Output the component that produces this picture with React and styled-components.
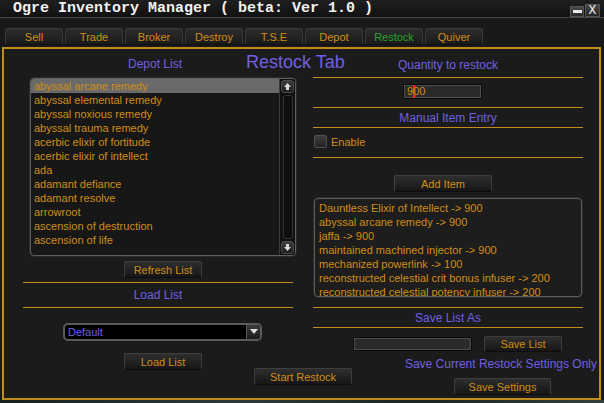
import React from "react";
import styled, { createGlobalStyle } from "styled-components";

const ORANGE = "#d08e14";
const PURPLE = "#6e60e0";
const GOLD = "#c08c1c";

const GlobalStyle = createGlobalStyle`
  html, body {
    margin: 0;
    padding: 0;
    background: #111616;
  }
  body {
    font-family: "Liberation Sans", Arial, sans-serif;
  }
`;

const depotItems = [
  "abyssal arcane remedy",
  "abyssal elemental remedy",
  "abyssal noxious remedy",
  "abyssal trauma remedy",
  "acerbic elixir of fortitude",
  "acerbic elixir of intellect",
  "ada",
  "adamant defiance",
  "adamant resolve",
  "arrowroot",
  "ascension of destruction",
  "ascension of life",
];

const restockItems = [
  "Dauntless Elixir of Intellect -> 900",
  "abyssal arcane remedy -> 900",
  "jaffa -> 900",
  "maintained machined injector -> 900",
  "mechanized powerlink -> 100",
  "reconstructed celestial crit bonus infuser -> 200",
  "reconstructed celestial potency infuser -> 200",
];

const tabs = ["Sell", "Trade", "Broker", "Destroy", "T.S.E", "Depot", "Restock", "Quiver"];

function Arrow({ down }) {
  return (
    <svg width="9" height="9" viewBox="0 0 9 9">
      <polygon
        points="4.5,1 8,5 6,5 6,8 3,8 3,5 1,5"
        fill="#d8d8d8"
        transform={down ? "rotate(180 4.5 4.5)" : undefined}
      />
    </svg>
  );
}

export default function App() {
  return (
    <>
      <GlobalStyle />
      <Window>
        <TitleBar>
          <Title>Ogre Inventory Manager ( beta: Ver 1.0 )</Title>
          <Controls>
            <MinButton>
              <MinBar />
            </MinButton>
            <CloseButton>X</CloseButton>
          </Controls>
        </TitleBar>
        <Body>
          <TabStrip>
            {tabs.map((t) => (
              <Tab key={t} $active={t === "Restock"}>
                {t}
              </Tab>
            ))}
          </TabStrip>
          <Panel>
            <LeftColumn>
              <Header>
                <SectionTitle>Depot List</SectionTitle>
                <BigTitle>Restock Tab</BigTitle>
              </Header>
              <ListBox>
                <ListItems>
                  {depotItems.map((item, i) => (
                    <ListRow key={item} $selected={i === 0}>
                      {item}
                    </ListRow>
                  ))}
                </ListItems>
                <ScrollBar>
                  <ScrollButton>
                    <Arrow />
                  </ScrollButton>
                  <ScrollTrack />
                  <ScrollButton>
                    <Arrow down />
                  </ScrollButton>
                </ScrollBar>
              </ListBox>
              <Button $w={78} $ml={101} $mt={5}>Refresh List</Button>
              <Rule $mt={4} />
              <Label $mt={5}>Load List</Label>
              <Rule $mt={5} />
              <Dropdown>
                <DropdownText>Default</DropdownText>
                <DropdownArrow>
                  <svg width="8" height="6" viewBox="0 0 8 6">
                    <polygon points="0,0 8,0 4,5" fill="#e0e0e0" />
                  </svg>
                </DropdownArrow>
              </Dropdown>
              <Button $w={78} $ml={101} $mt={12}>Load List</Button>
            </LeftColumn>

            <RightColumn>
              <Label $mt={7}>Quantity to restock</Label>
              <Rule $mt={5} />
              <QtyInput>
                9<Caret />00
              </QtyInput>
              <Rule $mt={8} />
              <Label $mt={3}>Manual Item Entry</Label>
              <Rule $mt={2} />
              <CheckRow>
                <CheckBox />
                <CheckLabel>Enable</CheckLabel>
              </CheckRow>
              <Rule $mt={9} />
              <Button $w={98} $ml={81} $mt={17}>Add Item</Button>
              <ItemBox>
                {restockItems.map((item) => (
                  <ItemLine key={item}>{item}</ItemLine>
                ))}
              </ItemBox>
              <Rule $mt={10} />
              <Label $mt={3}>Save List As</Label>
              <Rule $mt={2} />
              <SaveRow>
                <NameInput />
                <Button $w={78} $h={16}>Save List</Button>
              </SaveRow>
              <NoteLabel>Save Current Restock Settings Only</NoteLabel>
              <Button $w={97} $ml={141} $mt={7}>Save Settings</Button>
            </RightColumn>

            <StartButton>Start Restock</StartButton>
          </Panel>
          <BottomEdge />
        </Body>
      </Window>
    </>
  );
}

const Window = styled.div`
  width: 604px;
  height: 403px;
  display: flex;
  flex-direction: column;
  background: #171717;
  overflow: hidden;
`;

const TitleBar = styled.div`
  height: 17px;
  border-bottom: 1px solid #474747;
  background: linear-gradient(#1f1f1f, #111111);
  display: flex;
  align-items: center;
  padding-left: 13px;
`;

const Title = styled.span`
  font-family: "Liberation Mono", "DejaVu Sans Mono", monospace;
  font-weight: 700;
  font-size: 15px;
  line-height: 17px;
  color: #f2f2f2;
  white-space: pre;
`;

const Controls = styled.div`
  margin-left: auto;
  height: 100%;
  display: flex;
  align-items: flex-end;
  gap: 1px;
  padding-right: 4px;
`;

const MinButton = styled.div`
  width: 14px;
  height: 11px;
  box-sizing: border-box;
  border: 1px solid #555;
  background: linear-gradient(#4a4a4a, #2a2a2a);
  display: flex;
  align-items: center;
  justify-content: center;
`;

const MinBar = styled.div`
  width: 9px;
  height: 3px;
  background: #e8e8e8;
`;

const CloseButton = styled.div`
  width: 15px;
  height: 13px;
  box-sizing: border-box;
  border: 1px solid #555;
  background: linear-gradient(#444, #262626);
  color: #f0f0f0;
  font-family: "Liberation Mono", monospace;
  font-size: 13px;
  line-height: 12px;
  text-align: center;
`;

const Body = styled.div`
  flex: 1;
  display: flex;
  flex-direction: column;
  padding: 10px 3px 0 2px;
  background: #191919;
  border-left: 1px solid #2f3a3a;
  margin-left: -1px;
`;

const TabStrip = styled.div`
  display: flex;
  gap: 2px;
  margin-left: 3px;
  height: 17px;
`;

const Tab = styled.div`
  width: 58px;
  box-sizing: border-box;
  border: 1px solid #3a3a3a;
  border-bottom-color: #101010;
  border-radius: 3px;
  background: linear-gradient(#2d2d2d, #1a1a1a);
  color: ${(p) => (p.$active ? "#2ca52c" : ORANGE)};
  font-size: 11px;
  display: flex;
  align-items: center;
  justify-content: center;
`;

const Panel = styled.div`
  margin-top: 2px;
  height: 353px;
  box-sizing: border-box;
  border: 2px solid ${GOLD};
  background: #1b1b1b;
  padding: 2px 0 0 19px;
  display: grid;
  grid-template-columns: 273px 270px;
  grid-template-rows: 1fr;
  column-gap: 17px;
`;

const LeftColumn = styled.div`
  grid-row: 1;
  grid-column: 1;
  display: flex;
  flex-direction: column;
  align-items: flex-start;
`;

const RightColumn = styled.div`
  grid-row: 1;
  grid-column: 2;
  display: flex;
  flex-direction: column;
  align-items: flex-start;
`;

const Header = styled.div`
  height: 22px;
  display: flex;
  align-items: baseline;
  padding-left: 105px;
  white-space: nowrap;
`;

const SectionTitle = styled.span`
  color: ${PURPLE};
  font-size: 12px;
  line-height: 14px;
`;

const BigTitle = styled.span`
  color: ${PURPLE};
  font-size: 18px;
  line-height: 22px;
  margin-left: 64px;
`;

const ListBox = styled.div`
  margin: 5px 0 0 7px;
  width: 266px;
  height: 178px;
  box-sizing: border-box;
  border: 1px solid #5e5e5e;
  box-shadow: 0 0 0 1px #2a2a2a;
  border-radius: 4px;
  background: #171717;
  display: flex;
  overflow: hidden;
`;

const ListItems = styled.div`
  flex: 1;
  display: flex;
  flex-direction: column;
`;

const ListRow = styled.div`
  height: 14px;
  line-height: 14px;
  padding-left: 3px;
  font-size: 11px;
  color: ${ORANGE};
  white-space: nowrap;
  background: ${(p) => (p.$selected ? "#6a6a6a" : "transparent")};
`;

const ScrollBar = styled.div`
  width: 16px;
  display: flex;
  flex-direction: column;
  align-items: center;
  padding: 1px 0;
  box-sizing: border-box;
  background: #111;
  border-left: 1px solid #3a3a3a;
`;

const ScrollButton = styled.div`
  width: 13px;
  height: 13px;
  box-sizing: border-box;
  border: 1px solid #4a4a4a;
  border-radius: 3px;
  background: linear-gradient(#3c3c3c, #1e1e1e);
  display: flex;
  align-items: center;
  justify-content: center;
`;

const ScrollTrack = styled.div`
  flex: 1;
  width: 10px;
  margin: 2px 0;
  box-sizing: border-box;
  border: 1px solid #333;
  border-radius: 3px;
  background: #0e0e0e;
`;

const Button = styled.div`
  width: ${(p) => p.$w}px;
  height: ${(p) => p.$h || 17}px;
  margin-left: ${(p) => p.$ml || 0}px;
  margin-top: ${(p) => p.$mt || 0}px;
  box-sizing: border-box;
  border: 1px solid #3e3e3e;
  border-bottom-color: #0c0c0c;
  border-radius: 2px;
  background: linear-gradient(#2e2e2e, #161616);
  color: ${ORANGE};
  font-size: 11px;
  display: flex;
  align-items: center;
  justify-content: center;
  white-space: nowrap;
`;

const StartButton = styled(Button).attrs({ $w: 98 })`
  grid-row: 1;
  grid-column: 1 / -1;
  align-self: end;
  justify-self: center;
  margin-bottom: 13px;
`;

const Rule = styled.div`
  width: 270px;
  height: 1px;
  margin-top: ${(p) => p.$mt}px;
  background: ${GOLD};
  flex-shrink: 0;
`;

const Label = styled.div`
  width: 270px;
  margin-top: ${(p) => p.$mt}px;
  height: 14px;
  line-height: 14px;
  text-align: center;
  color: ${PURPLE};
  font-size: 12px;
  white-space: nowrap;
`;

const Dropdown = styled.div`
  margin: 15px 0 0 40px;
  width: 199px;
  height: 18px;
  box-sizing: border-box;
  border: 2px solid #5a5a5a;
  border-radius: 5px;
  background: #000;
  display: flex;
  align-items: center;
  overflow: hidden;
`;

const DropdownText = styled.span`
  flex: 1;
  padding-left: 3px;
  color: ${PURPLE};
  font-size: 11px;
`;

const DropdownArrow = styled.div`
  width: 13px;
  height: 100%;
  border-left: 1px solid #555;
  background: linear-gradient(#3a3a3a, #1c1c1c);
  display: flex;
  align-items: center;
  justify-content: center;
`;

const QtyInput = styled.div`
  margin: 6px 0 0 90px;
  width: 79px;
  height: 15px;
  box-sizing: border-box;
  border: 1px solid #080808;
  box-shadow: inset 0 0 0 1px #505050;
  background: #2a2a2a;
  color: ${ORANGE};
  font-size: 11px;
  line-height: 13px;
  padding-left: 3px;
  display: flex;
  align-items: center;
`;

const Caret = styled.span`
  display: inline-block;
  width: 3px;
  height: 13px;
  margin-right: -3px;
  background: #e01010;
  box-shadow: inset 1px 0 0 #ff3030;
`;

const CheckRow = styled.div`
  margin-top: 7px;
  display: flex;
  align-items: center;
  gap: 4px;
  padding-left: 1px;
  height: 13px;
`;

const CheckBox = styled.div`
  width: 13px;
  height: 13px;
  box-sizing: border-box;
  border: 1px solid #505050;
  border-radius: 2px;
  background: linear-gradient(#3e3e3e, #222);
`;

const CheckLabel = styled.span`
  color: ${ORANGE};
  font-size: 11px;
`;

const ItemBox = styled.div`
  margin: 6px 0 0 1px;
  width: 268px;
  height: 99px;
  box-sizing: border-box;
  border: 1px solid #5e5e5e;
  box-shadow: 0 0 0 1px #2a2a2a;
  border-radius: 4px;
  background: #1d1d1d;
  padding: 2px 0 0 4px;
  overflow: hidden;
`;

const ItemLine = styled.div`
  height: 14px;
  line-height: 14px;
  font-size: 11px;
  color: ${ORANGE};
  white-space: nowrap;
`;

const SaveRow = styled.div`
  margin-top: 8px;
  padding-left: 40px;
  display: flex;
  align-items: center;
  gap: 12px;
  height: 16px;
`;

const NameInput = styled.div`
  width: 119px;
  height: 14px;
  box-sizing: border-box;
  border: 1px solid #080808;
  box-shadow: inset 0 0 0 1px #4e4e4e;
  background: #2b2b2b;
`;

const NoteLabel = styled.div`
  margin-top: 5px;
  align-self: flex-end;
  margin-right: -14px;
  height: 14px;
  line-height: 14px;
  color: ${PURPLE};
  font-size: 12px;
  white-space: nowrap;
`;

const BottomEdge = styled.div`
  flex: 1;
  margin: 0 -3px 0 -2px;
  background: linear-gradient(90deg, #16201f, #2b3a38 40%, #1a2422 70%, #33403d);
`;
